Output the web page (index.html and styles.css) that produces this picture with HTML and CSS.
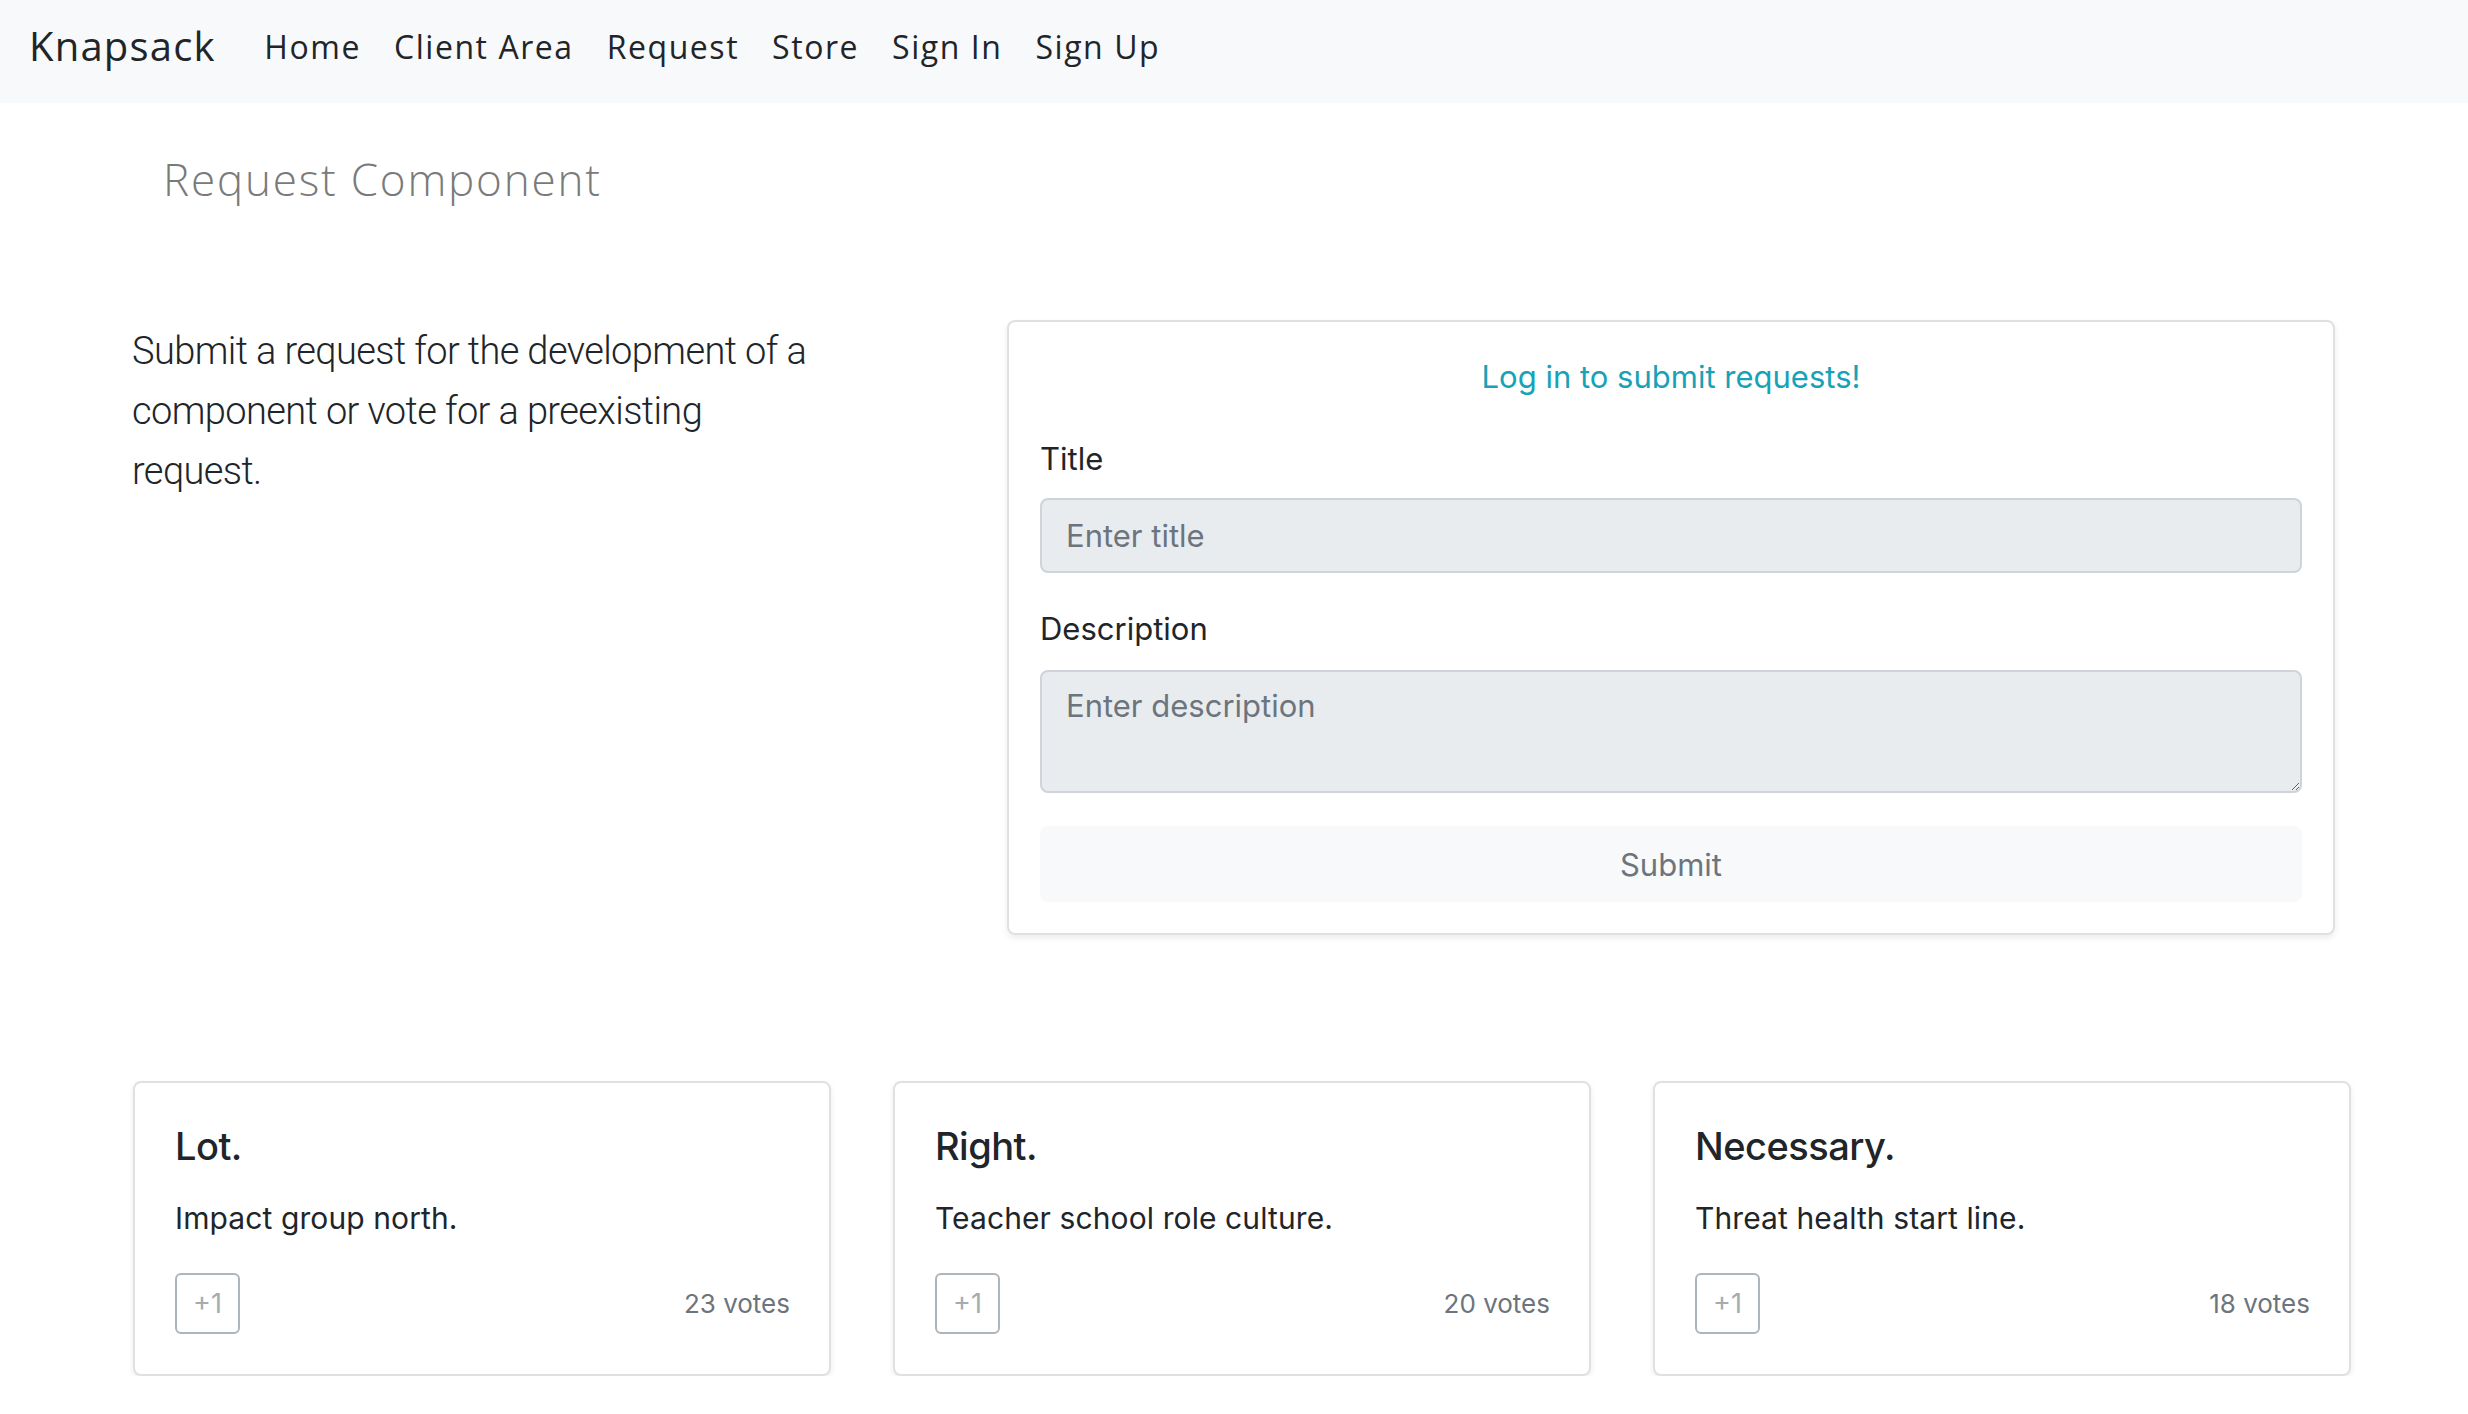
FILE: index.html
```html
<!DOCTYPE html>
<html lang="en">
<head>
<meta charset="utf-8">
<title>Knapsack - Request Component</title>
<link rel="stylesheet" href="styles.css">
</head>
<body>
<nav class="navbar">
  <a class="brand" href="#">Knapsack</a>
  <ul class="nav">
    <li><a class="nav-link" href="#">Home</a></li>
    <li><a class="nav-link" href="#">Client Area</a></li>
    <li><a class="nav-link" href="#">Request</a></li>
    <li><a class="nav-link" href="#">Store</a></li>
    <li><a class="nav-link" href="#">Sign In</a></li>
    <li><a class="nav-link" href="#">Sign Up</a></li>
  </ul>
</nav>
<main class="page">
  <h1 class="page-title">Request Component</h1>
  <section class="intro-row">
    <div class="intro">
      <p class="intro-text">Submit a request for the development of a component or vote for a preexisting request.</p>
    </div>
    <form class="form-card">
      <p class="login-note">Log in to submit requests!</p>
      <label class="field-label" for="title">Title</label>
      <input class="field-input" id="title" type="text" placeholder="Enter title" disabled>
      <label class="field-label field-label-2" for="desc">Description</label>
      <textarea class="field-textarea" id="desc" placeholder="Enter description" disabled></textarea>
      <button class="submit-btn" type="button">Submit</button>
    </form>
  </section>
  <section class="requests">
    <div class="req-card">
      <h2 class="req-title">Lot.</h2>
      <p class="req-desc">Impact group north.</p>
      <div class="req-foot"><button class="vote-btn" type="button">+1</button><span class="votes">23 votes</span></div>
    </div>
    <div class="req-card">
      <h2 class="req-title">Right.</h2>
      <p class="req-desc">Teacher school role culture.</p>
      <div class="req-foot"><button class="vote-btn" type="button">+1</button><span class="votes">20 votes</span></div>
    </div>
    <div class="req-card">
      <h2 class="req-title">Necessary.</h2>
      <p class="req-desc">Threat health start line.</p>
      <div class="req-foot"><button class="vote-btn" type="button">+1</button><span class="votes">18 votes</span></div>
    </div>
  </section>
</main>
</body>
</html>
```
FILE: styles.css
```css
* { box-sizing: border-box; }
html, body { margin: 0; padding: 0; background: #fff; }
body { font-family: "Inter", "Liberation Sans", sans-serif; color: #212529; }

.navbar {
  height: 103px;
  background: #f8f9fa;
  display: flex;
  align-items: center;
  padding-left: 29px;
  padding-bottom: 9px;
}
.brand {
  font-family: "Open Sans", "Liberation Sans", sans-serif;
  font-size: 40px;
  letter-spacing: 1.2px;
  color: #212529;
  text-decoration: none;
  line-height: 1;
  margin-right: 32px;
  padding-bottom: 2px;
}
.nav { list-style: none; margin: 0; padding: 0; display: flex; }
.nav-link {
  display: block;
  font-family: "Open Sans", "Liberation Sans", sans-serif;
  font-size: 32px;
  letter-spacing: 1.55px;
  color: #212529;
  text-decoration: none;
  padding: 0 16.5px;
  line-height: 1;
}

.page { padding-left: 132px; width: 2351px; }

.page-title {
  font-family: "Open Sans", "Liberation Sans", sans-serif;
  font-weight: 300;
  font-size: 44px;
  line-height: 52px;
  color: #7a7a7a;
  margin: 0;
  padding: 50px 0 0 31px;
  letter-spacing: 1.8px;
}

.intro-row { display: flex; margin-top: 115px; }
.intro { width: 875px; flex: none; padding-top: 1px; }
.intro-text {
  font-family: "Roboto", "Liberation Sans", sans-serif;
  font-weight: 300;
  font-size: 38px;
  line-height: 60px;
  letter-spacing: -0.6px;
  color: #212529;
  margin: 0;
  max-width: 695px;
}

.form-card {
  width: 1328px;
  flex: none;
  border: 2px solid #e0e0e0;
  border-radius: 8px;
  box-shadow: 0 3px 6px rgba(0,0,0,0.08);
  padding: 31px 31px 31px;
  display: flex;
  flex-direction: column;
}
.login-note {
  margin: 0 0 34px;
  text-align: center;
  font-size: 31px;
  line-height: 48px;
  color: #17a2b8;
}
.field-label { font-size: 31px; line-height: 48px; color: #212529; }
.field-label-2 { margin-top: 32px; }
.field-input, .field-textarea {
  display: block;
  width: 100%;
  margin-top: 15px;
  background: #e9ecef;
  border: 2px solid #ced4da;
  border-radius: 8px;
  font-family: "Inter", "Liberation Sans", sans-serif;
  font-size: 31px;
  color: #495057;
  padding: 0 24px;
}
.field-input { height: 75px; }
.field-textarea { height: 123px; padding-top: 10px; line-height: 48px; resize: vertical; margin-top: 17px; }
.field-input::placeholder, .field-textarea::placeholder { color: #6c757d; opacity: 1; }
.submit-btn {
  margin-top: 33px;
  height: 76px;
  border: none;
  border-radius: 8px;
  background: #f8f9fa;
  font-family: "Inter", "Liberation Sans", sans-serif;
  font-size: 31px;
  color: #6c757d;
}

.requests {
  display: grid;
  grid-template-columns: repeat(3, 698px);
  column-gap: 62px;
  margin-top: 146px;
  padding-left: 1px;
}
.req-card {
  height: 295px;
  border: 2px solid #e0e0e0;
  border-radius: 8px;
  box-shadow: 0 3px 6px rgba(0,0,0,0.08);
  padding: 40px 39px 39px 40px;
}
.req-title {
  margin: 0;
  font-size: 38px;
  line-height: 46px;
  font-weight: 500;
  letter-spacing: -0.5px;
  color: #212529;
}
.req-desc {
  margin: 27px 0 0;
  font-size: 30px;
  line-height: 45px;
  color: #212529;
  letter-spacing: 0.1px;
}
.req-foot {
  margin-top: 32px;
  display: flex;
  align-items: center;
  justify-content: space-between;
}
.vote-btn {
  width: 65px;
  height: 61px;
  border: 2px solid #adb5bd;
  border-radius: 6px;
  background: #fff;
  font-family: "Inter", "Liberation Sans", sans-serif;
  font-size: 27px;
  color: #a3abb3;
  padding: 0;
}
.votes { font-size: 26px; color: #6c757d; }
```
